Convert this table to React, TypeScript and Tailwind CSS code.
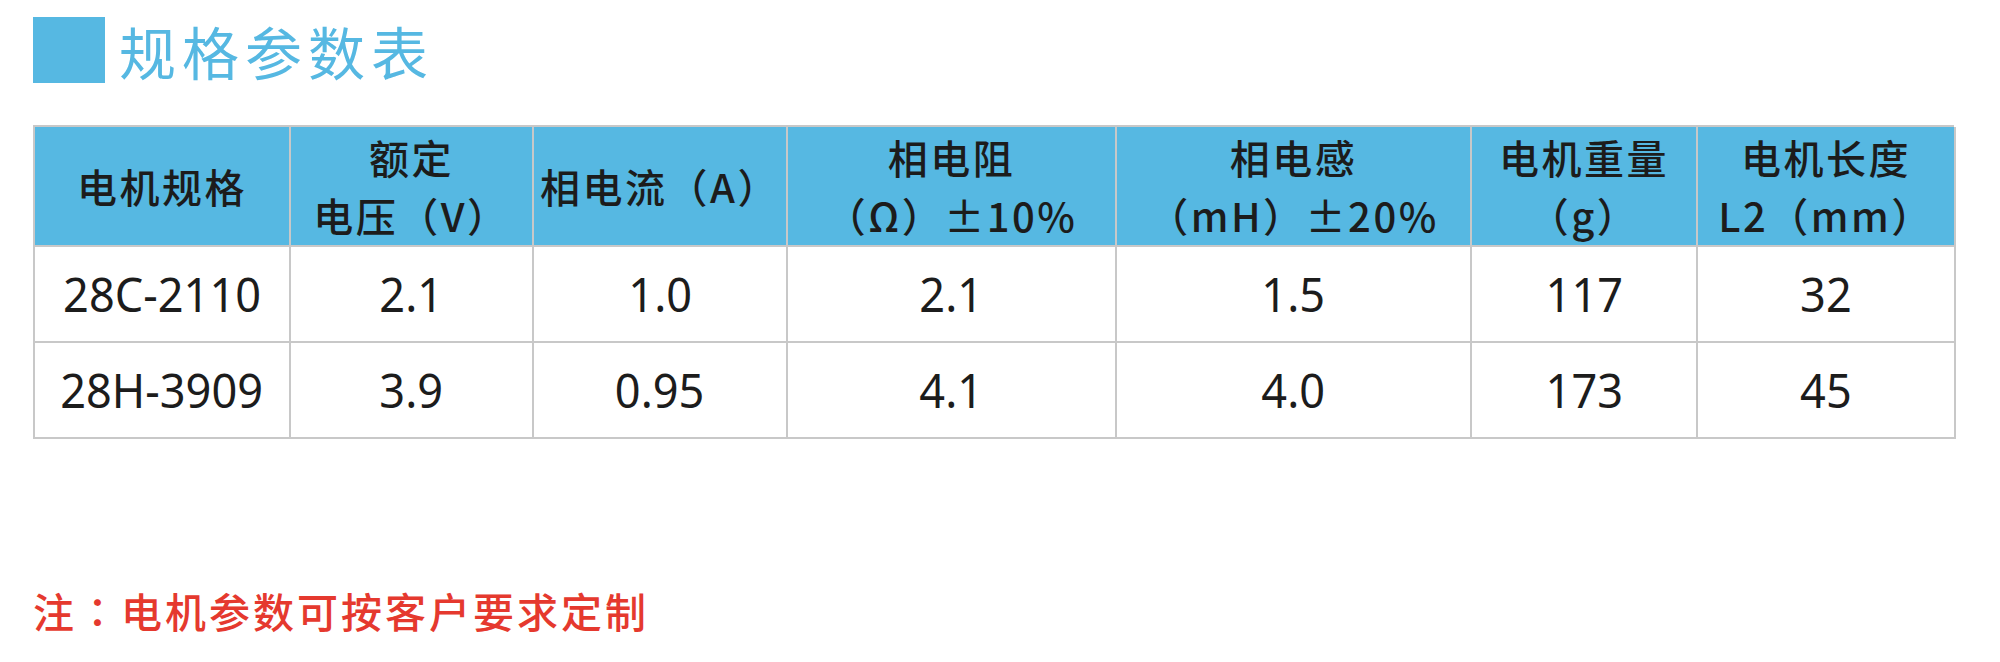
const headers: string[][] = [
  ["电机规格"],
  ["额定", "电压（V）"],
  ["相电流（A）"],
  ["相电阻", "（Ω）±10%"],
  ["相电感", "（mH）±20%"],
  ["电机重量", "（g）"],
  ["电机长度", "L2（mm）"],
];

const rows: string[][] = [
  ["28C-2110", "2.1", "1.0", "2.1", "1.5", "117", "32"],
  ["28H-3909", "3.9", "0.95", "4.1", "4.0", "173", "45"],
];

export default function App() {
  return (
    <div className="w-[2000px] h-[662px] bg-white overflow-hidden pl-[33px] font-['Noto_Sans_CJK_SC',sans-serif] text-[#1c1c1c]">
      {/* 标题 */}
      <div className="flex items-center pt-[17px]">
        <div className="w-[72px] h-[66px] bg-[#56b8e2]" />
        <h1 className="ml-[14px] text-[57px] leading-[66px] tracking-[6px] text-[#56b8e2] font-normal">
          规格参数表
        </h1>
      </div>

      {/* 参数表 */}
      <div className="mt-[42px] w-[1921px] grid grid-cols-[256px_243px_254px_329px_355px_226px_258px] border-l-2 border-t-2 border-[#c8c8c8]">
        {headers.map((lines, i) => (
          <div
            key={i}
            className="h-[120px] bg-[#56b8e2] border-r-2 border-b-2 border-[#c8c8c8] flex flex-col items-center justify-center text-[40px] leading-[58px] tracking-[2.5px] font-medium whitespace-nowrap"
          >
            {lines.map((l) => (
              <span key={l}>{l}</span>
            ))}
          </div>
        ))}
        {rows.map((row, r) =>
          row.map((cell, c) => (
            <div
              key={`${r}-${c}`}
              className="h-[96px] border-r-2 border-b-2 border-[#c8c8c8] flex items-center justify-center"
            >
              <span className="inline-block scale-x-[0.96] font-['Noto_Sans',sans-serif] text-[47px] leading-none">
                {cell}
              </span>
            </div>
          ))
        )}
      </div>

      {/* 备注 */}
      <p className="mt-[148px] text-[41px] leading-[46px] tracking-[3px] font-medium text-[#e5392e]">
        注<span className="font-['Noto_Sans_CJK_TC',sans-serif]">：</span>电机参数可按客户要求定制
      </p>
    </div>
  );
}
